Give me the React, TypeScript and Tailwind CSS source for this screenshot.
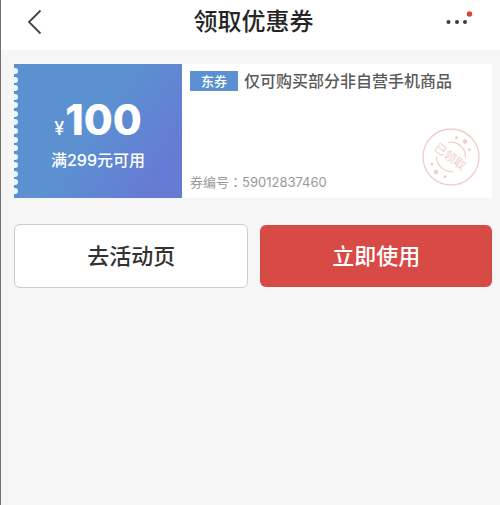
const PERFORATIONS = Array.from({ length: 15 }, (_, index) => index);

function Header() {
  return (
    <header className="flex h-[50px] items-center justify-between bg-white pt-[2px] pr-6 pb-2 pl-[26px]">
      <button type="button" aria-label="返回" className="flex h-8 w-11 items-center text-[#444444]">
        <svg width="16" height="26" viewBox="0 0 16 26" fill="none" stroke="currentColor" strokeWidth="1.8">
          <path d="M13.5 1.5 2 13 13.5 24.5" />
        </svg>
      </button>
      <h1 className="text-2xl font-medium text-[#262626]">领取优惠券</h1>
      <button type="button" aria-label="更多" className="flex h-8 w-10 items-center justify-end text-[#3c3c3c]">
        <svg width="30" height="26" viewBox="0 0 30 26" fill="currentColor">
          <circle cx="2.5" cy="13" r="2" />
          <circle cx="11" cy="13" r="2" />
          <circle cx="19" cy="13" r="2" />
          <circle cx="23.5" cy="5" r="2.7" fill="#d8433b" />
        </svg>
      </button>
    </header>
  );
}

function ReceivedStamp() {
  return (
    <svg
      width="58"
      height="58"
      viewBox="0 0 58 58"
      fill="none"
      stroke="#f0cccc"
      className="shrink-0"
      role="img"
      aria-label="已领取"
    >
      <circle cx="29" cy="29" r="28" strokeWidth="1.3" />
      <path d="M26 14.500A14.500 14.500 0 0 1 43.500 29" strokeWidth="1.2" />
      <path d="M14.500 28.500A15 15 0 0 0 31 43.500" strokeWidth="1.2" />
      <g fill="#f0cccc" stroke="none">
        <circle cx="34.500" cy="9.500" r="1.500" />
        <circle cx="43" cy="13.500" r="2.200" />
        <circle cx="47.500" cy="21.500" r="1.500" />
        <circle cx="10" cy="36" r="1.500" />
        <circle cx="14" cy="44" r="2.200" />
        <circle cx="23" cy="48.500" r="1.500" />
        <text
          x="28"
          y="33"
          fontSize="12"
          fontWeight="400"
          textAnchor="middle"
          transform="rotate(37 28 29)"
        >
          已领取
        </text>
      </g>
    </svg>
  );
}

function Coupon() {
  return (
    <article className="flex h-[134px] bg-white">
      <div className="flex w-[168px] shrink-0 bg-linear-[125deg,#5b91d1_45%,#667bd4_85%]">
        <div aria-hidden="true" className="flex w-1 shrink-0 flex-col justify-between overflow-hidden py-1">
          {PERFORATIONS.map((index) => (
            <span key={index} className="-ml-0.5 size-1.5 rounded-full bg-[#e9f7ff]" />
          ))}
        </div>
        <div className="flex grow flex-col items-center pt-8 pr-1 text-white">
          <p className="flex items-baseline gap-px leading-12">
            <span className="text-lg font-medium">¥</span>
            <strong className="text-[42px] font-extrabold">100</strong>
          </p>
          <p className="text-base leading-8 font-medium">满299元可用</p>
        </div>
      </div>
      <div className="flex min-w-0 grow flex-col justify-between pt-[5px] pr-3 pb-2 pl-2">
        <h2 className="flex items-center gap-1.5 text-base leading-6 font-medium whitespace-nowrap text-[#5a5a5a]">
          <span className="flex h-5 w-12 items-center justify-center bg-[#5b91d1] text-[13px] text-white">东券</span>
          仅可购买部分非自营手机商品
        </h2>
        <div className="flex items-end justify-between">
          <p className="text-[13px] leading-4 text-[#999999]">
            券编号
            <span lang="zh-TW" className="font-['Noto_Sans_CJK_TC',sans-serif]">：</span>
            59012837460
          </p>
          <div className="pb-1">
            <ReceivedStamp />
          </div>
        </div>
      </div>
    </article>
  );
}

export default function App() {
  return (
    <div
      lang="zh-CN"
      className="min-h-screen border-l border-[#707070] bg-[#f6f6f6] font-['Inter','Noto_Sans_CJK_SC',sans-serif]"
    >
      <Header />
      <main className="pt-[14px] pr-2 pl-[13px]">
        <Coupon />
        <div className="grid grid-cols-[235fr_232fr] gap-3 pt-[26px] text-[22px] font-medium">
          <button type="button" className="h-16 rounded-md border border-[#cccccc] bg-white text-[#333333]">
            去活动页
          </button>
          <button type="button" className="my-px rounded-md bg-[#d84a46] text-white">
            立即使用
          </button>
        </div>
      </main>
    </div>
  );
}
